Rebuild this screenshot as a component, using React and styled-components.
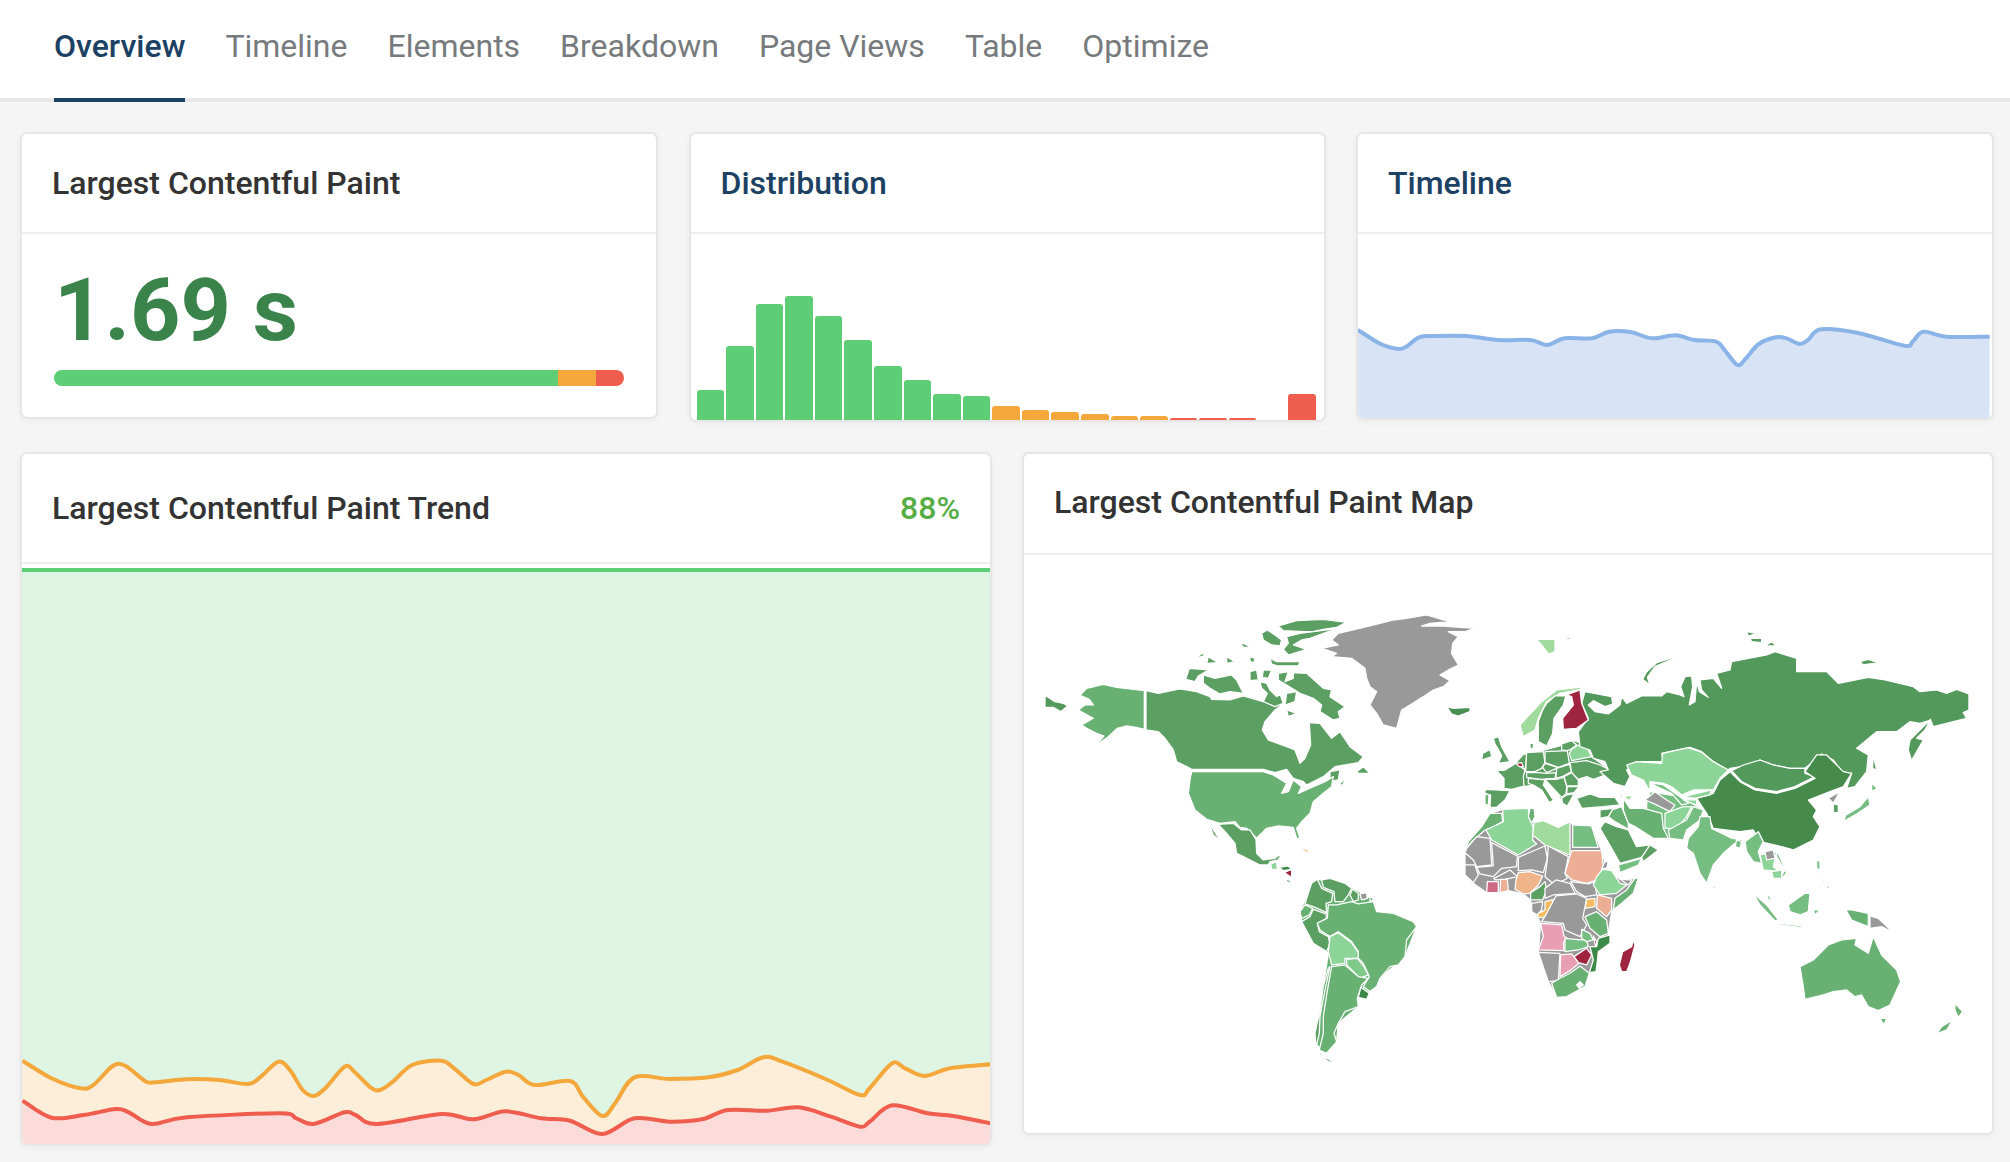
import React from 'react';
import styled, { createGlobalStyle } from 'styled-components';

const GlobalStyle = createGlobalStyle`
	html, body {
		margin: 0;
		padding: 0;
		background: #f5f5f5;
		font-family: 'Roboto', 'Liberation Sans', sans-serif;
	}
	* {
		box-sizing: border-box;
	}
`;

const GREEN = '#5ece76';
const ORANGE = '#f4a73b';
const RED = '#ef5d4e';
const NAVY = '#1c4163';

const Page = styled.div`
	width: 2010px;
	min-height: 1162px;
	background: #f5f5f5;
`;

const Tabs = styled.nav`
	display: flex;
	gap: 40px;
	height: 102px;
	padding-left: 54px;
	background: #fff;
	border-bottom: 4px solid #e8e8e8;
`;

const Tab = styled.a`
	height: 102px;
	line-height: 92px;
	font-size: 32px;
	font-weight: ${(p) => (p.$active ? 500 : 400)};
	color: ${(p) => (p.$active ? NAVY : '#767a7d')};
	border-bottom: 4px solid ${(p) => (p.$active ? NAVY : 'transparent')};
`;

const Content = styled.main`
	display: flex;
	flex-direction: column;
	gap: 30px;
	padding: 30px 16px 0 20px;
`;

const TopRow = styled.section`
	display: grid;
	grid-template-columns: 638px 637px 638px;
	gap: 30.5px;
	align-items: start;
`;

const BottomRow = styled.section`
	display: grid;
	grid-template-columns: 972px 972px;
	gap: 30px;
	align-items: start;
`;

const Card = styled.div`
	height: ${(p) => p.$height}px;
	background: #fff;
	border: 2px solid #e6e6e6;
	border-radius: 7px;
	box-shadow: 0 2px 6px rgba(0, 0, 0, 0.04);
	overflow: hidden;
`;

const CardHeader = styled.header`
	display: flex;
	align-items: center;
	justify-content: space-between;
	height: ${(p) => p.$height}px;
	padding: 0 30px ${(p) => p.$lift || 0}px;
	border-bottom: 2px solid #eeeeee;
`;

const CardTitle = styled.h2`
	margin: 0;
	font-size: 32px;
	font-weight: 500;
	color: ${(p) => p.$color || '#333'};
`;

const Percent = styled.span`
	font-size: 32px;
	font-weight: 500;
	color: #56ad44;
`;

const ValueBody = styled.div`
	padding: 23px 32px 0 32px;
`;

const Value = styled.div`
	height: 113px;
	font-size: 88px;
	line-height: 106px;
	font-weight: 700;
	color: #3a844c;
`;

const Bar = styled.div`
	display: flex;
	height: 16px;
	border-radius: 8px;
	overflow: hidden;
`;

const BarPart = styled.span`
	flex: ${(p) => p.$size} 0 0;
	background: ${(p) => p.$color};
`;

const Histogram = styled.div`
	display: flex;
	align-items: flex-end;
	gap: 2px;
	height: 186px;
	padding: 0 8px 0 6px;
`;

const HistBar = styled.span`
	flex: 1;
	height: ${(p) => p.$h}px;
	background: ${(p) => p.$color};
	border-radius: 3px 3px 0 0;
`;

const Chart = styled.svg`
	display: block;
	width: 100%;
	height: ${(p) => p.$height}px;
`;

const hist = [30, 74, 116, 124, 104, 80, 54, 40, 26, 24, 14, 10, 8, 6, 4, 4, 2, 2, 2, 0, 26];
const histColor = (i) => (i < 10 ? GREEN : i < 16 ? ORANGE : RED);

// Catmull-Rom through the points, good enough for the sparkline curves
const smooth = (pts) => {
	let d = `M${pts[0][0].toFixed(1)},${pts[0][1].toFixed(1)}`;
	for (let i = 0; i < pts.length - 1; i++) {
		const p0 = pts[i - 1] || pts[i];
		const p1 = pts[i];
		const p2 = pts[i + 1];
		const p3 = pts[i + 2] || p2;
		const c1 = [p1[0] + (p2[0] - p0[0]) / 6, p1[1] + (p2[1] - p0[1]) / 6];
		const c2 = [p2[0] - (p3[0] - p1[0]) / 6, p2[1] - (p3[1] - p1[1]) / 6];
		d += ` C${c1[0].toFixed(1)},${c1[1].toFixed(1)} ${c2[0].toFixed(1)},${c2[1].toFixed(1)} ${p2[0].toFixed(1)},${p2[1].toFixed(1)}`;
	}
	return d;
};

const timelinePts = [
	[42, 630], [95, 672], [135, 687], [155, 680], [185, 652], [220, 648], [295, 648], [370, 660], [445, 660], [485, 675],
	[525, 655], [590, 655], [630, 635], [680, 636], [730, 655], [785, 646], [830, 660], [880, 665], [900, 690], [930, 735],
	[950, 715], [980, 672], [1020, 652], [1045, 655], [1075, 672], [1095, 660], [1125, 628], [1210, 638], [1320, 677],
	[1340, 665], [1365, 635], [1420, 650], [1520, 650],
].map(([x, y]) => [1340 + x / 2.34, 120 + y / 3]);

const trendScale = ([x, y]) => [x / 1.5525, 1000 + y / 3];

const orangePts = [
	[35, 182], [80, 235], [125, 265], [145, 255], [175, 198], [195, 198], [225, 243], [240, 247], [290, 238], [340, 240],
	[385, 252], [405, 230], [432, 185], [450, 210], [470, 270], [487, 288], [505, 265], [535, 200], [550, 215], [575, 262],
	[590, 270], [610, 245], [640, 195], [685, 182], [705, 205], [735, 252], [755, 240], [785, 215], [805, 225], [830, 255],
	[885, 243], [905, 290], [935, 348], [955, 310], [985, 232], [1040, 237], [1100, 232], [1145, 210], [1185, 172], [1215, 185],
	[1285, 240], [1335, 285], [1350, 265], [1385, 190], [1405, 205], [1435, 228], [1475, 205], [1538, 193],
].map(trendScale);

const redPts = [
	[35, 302], [80, 353], [130, 345], [180, 327], [200, 337], [235, 372], [290, 352], [435, 340], [460, 355], [487, 372],
	[535, 337], [552, 345], [585, 372], [685, 342], [735, 358], [785, 334], [840, 355], [885, 362], [935, 402], [985, 355],
	[1040, 365], [1090, 358], [1130, 330], [1190, 332], [1240, 322], [1290, 350], [1335, 380], [1350, 365], [1385, 316],
	[1440, 340], [1480, 348], [1538, 370],
].map(trendScale);

const area = (pts, bottom) => `${smooth(pts)} L${pts[pts.length - 1][0]},${bottom} L${pts[0][0]},${bottom} Z`;

const C = {
	canada: '#5c9f62',
	usa: '#69b073',
	russia: '#54995c',
	china: '#478b4c',
	mid: '#75bd80',
	light: '#8dd498',
	pale: '#a0da9d',
	grey: '#999999',
	wine: '#9e2440',
	salmon: '#ecae94',
	peach: '#f0b48a',
	pink: '#e89fb3',
	rose: '#cd6a85',
	amber: '#f5b95f',
	dark: '#3d8a48',
};

// coordinates are in 3x pixels, each group is moved into place below
const americas = [
	[C.russia, 'M45,316 L75,335 L100,340 L113,348 L92,365 L70,352 L45,352 Z'],
	[C.usa, 'M170,295 L220,283 L260,292 L343,302 L343,418 L318,412 L290,408 L262,415 L235,440 L195,468 L222,438 L200,430 L170,415 L155,405 L190,385 L172,375 L145,360 L165,345 L190,345 L178,328 L150,316 Z'],
	[C.canada, 'M348,302 L385,310 L450,297 L500,305 L540,320 L545,328 L600,330 L640,318 L700,335 L710,312 L745,335 L755,345 L735,360 L705,395 L697,420 L715,450 L770,470 L795,480 L810,520 L825,505 L842,465 L838,398 L870,400 L905,445 L930,425 L960,470 L1000,500 L985,518 L915,530 L880,560 L830,585 L820,575 L790,565 L770,538 L735,548 L700,538 L485,538 L470,530 L440,515 L430,480 L405,445 L385,425 L348,420 Z'],
	[C.canada, 'M745,250 L775,245 L765,275 L790,265 L790,248 L830,250 L880,295 L905,300 L900,320 L945,350 L925,365 L930,385 L910,390 L870,365 L875,345 L850,325 L810,310 L770,285 L745,270 Z'],
	[C.canada, 'M745,108 L800,92 L880,88 L950,97 L920,112 L880,118 L850,125 L825,125 L760,122 Z'],
	[C.canada, 'M770,140 L810,130 L850,125 L925,115 L895,125 L840,145 L815,150 L790,165 L830,178 L775,195 L760,178 L775,160 Z'],
	[C.canada, 'M520,255 L555,265 L605,255 L620,270 L640,310 L600,305 L570,312 L540,295 L520,280 Z'],
	[C.canada, 'M478,235 L535,240 L505,258 L495,275 L467,268 Z'],
	[C.canada, 'M720,205 L740,215 L810,215 L805,228 L745,228 L725,222 Z'],
	[C.canada, 'M695,130 L712,120 L735,135 L755,150 L750,168 L725,165 L700,150 Z'],
	[C.canada, 'M495,205 L525,185 L520,198 Z'],
	[C.canada, 'M535,200 L565,218 L530,220 Z'],
	[C.canada, 'M590,200 L615,215 L590,220 Z'],
	[C.canada, 'M630,155 L660,170 L640,172 Z'],
	[C.canada, 'M660,200 L675,205 L672,218 L660,215 Z'],
	[C.canada, 'M660,245 L680,240 L685,270 L660,272 Z'],
	[C.canada, 'M700,240 L725,240 L715,265 L697,262 Z'],
	[C.canada, 'M690,275 L710,280 L720,300 L740,320 L750,312 L760,340 L735,350 L700,335 L712,310 L695,295 Z'],
	[C.canada, 'M770,310 L800,305 L795,335 L765,345 Z'],
	[C.canada, 'M770,360 L800,370 L775,380 Z'],
	[C.canada, 'M980,545 L1000,530 L1020,550 L985,550 Z'],
	[C.canada, 'M900,545 L930,540 L925,570 L900,575 Z'],
	[C.canada, 'M930,580 L950,565 L935,588 Z'],
	[C.usa, 'M485,545 L700,545 L730,555 L770,580 L755,610 L775,605 L790,570 L815,590 L805,610 L850,590 L885,575 L910,560 L905,590 L880,610 L850,635 L840,670 L815,695 L800,715 L810,745 L800,745 L790,712 L745,708 L710,715 L680,745 L650,715 L630,712 L615,695 L570,700 L530,688 L495,660 L475,610 L480,570 Z'],
	[C.canada, 'M535,695 L560,735 L575,755 L550,735 Z'],
	[C.canada, 'M565,703 L610,700 L635,720 L660,720 L678,748 L680,790 L700,810 L735,805 L757,788 L745,810 L720,815 L715,825 L690,825 L640,800 L620,790 L615,760 L590,730 Z'],
	['#f5c48a', 'M805,772 L830,778 L845,792 L825,785 Z'],
	[C.light, 'M722,822 L740,815 L742,838 L725,838 Z'],
	[C.dark, 'M748,832 L775,828 L785,838 L760,842 Z'],
	[C.wine, 'M762,848 L785,838 L785,862 Z'],
	[C.canada, 'M770,865 L790,880 L810,888 L790,882 L770,875 Z'],
	// south america base, so no holes show between the countries
	[C.usa, 'M862,868 L945,880 L1030,930 L1040,965 L1150,995 L1160,1010 L1125,1100 L1050,1165 L1020,1205 L982,1225 L985,1250 L925,1300 L920,1355 L890,1390 L860,1365 L855,1330 L880,1190 L895,1090 L850,1060 L815,995 L810,965 L838,900 Z'],
	[C.canada, 'M862,868 L875,895 L908,910 L905,935 L888,940 L890,968 L850,950 L825,942 L838,900 L845,880 Z'],
	[C.canada, 'M875,870 L900,865 L945,880 L965,895 L955,915 L940,935 L915,935 L912,905 L880,892 Z'],
	[C.canada, 'M968,897 L985,910 L985,930 L970,935 L960,915 Z'],
	[C.grey, 'M990,912 L1010,908 L1012,925 L995,930 Z'],
	[C.canada, 'M1020,915 L1030,930 L1020,935 Z'],
	[C.usa, 'M825,945 L848,955 L838,975 L815,985 L810,965 Z'],
	[C.canada, 'M850,958 L888,972 L890,985 L862,1000 L868,1025 L895,1040 L900,1060 L890,1085 L850,1060 L815,995 L840,980 Z'],
	[C.usa, 'M895,945 L920,945 L965,935 L985,942 L1030,935 L1040,965 L1090,970 L1150,995 L1160,1010 L1130,1050 L1125,1100 L1105,1125 L1080,1130 L1050,1165 L1040,1190 L1020,1205 L1000,1190 L1018,1160 L1000,1120 L985,1105 L985,1085 L965,1055 L925,1025 L900,1040 L870,1020 L862,1000 L892,985 Z'],
	[C.light, 'M900,1040 L925,1028 L965,1058 L985,1088 L985,1105 L945,1105 L945,1120 L905,1125 L895,1085 Z'],
	['#7fc98a', 'M950,1108 L982,1105 L1002,1130 L1015,1155 L990,1165 L950,1125 Z'],
	[C.dark, 'M992,1192 L1018,1210 L1010,1228 L985,1222 Z'],
	[C.usa, 'M905,1130 L945,1125 L985,1160 L1015,1165 L995,1185 L982,1225 L985,1250 L945,1265 L925,1300 L912,1330 L920,1355 L890,1390 L868,1380 L880,1330 L880,1280 L890,1215 Z'],
	[C.canada, 'M900,1130 L885,1200 L870,1280 L868,1330 L860,1365 L870,1395 L895,1415 L920,1420 L880,1400 L858,1370 L855,1330 L870,1260 L880,1190 L895,1135 Z'],
	['#4a8f52', 'M1250,350 L1270,355 L1320,352 L1320,365 L1285,378 L1265,372 Z'],
	[C.grey, 'M1090,90 L1130,85 L1190,75 L1258,95 L1200,100 L1175,108 L1240,108 L1335,115 L1305,125 L1255,125 L1285,140 L1268,160 L1265,190 L1285,225 L1255,240 L1230,255 L1260,272 L1240,290 L1210,300 L1180,320 L1140,345 L1115,360 L1100,415 L1060,405 L1040,370 L1020,345 L1040,305 L1020,290 L1010,265 L1005,235 L965,205 L905,200 L920,190 L875,175 L925,165 L905,150 L925,130 L1010,110 L1050,100 Z'],
];

const europeAfrica = [
	[C.canada, 'M190,55 L205,50 L215,80 L240,125 L205,130 L215,108 L205,88 L195,72 Z'],
	[C.canada, 'M158,100 L180,88 L185,110 L155,120 Z'],
	// europe base
	[C.canada, 'M200,152 L225,150 L258,128 L285,100 L345,90 L400,75 L425,60 L470,75 L485,110 L520,135 L540,150 L525,165 L490,178 L470,170 L445,178 L448,195 L432,218 L412,225 L412,258 L398,250 L380,215 L345,180 L340,195 L370,240 L358,248 L335,210 L310,195 L282,200 L245,208 L222,205 L222,175 Z'],
	[C.canada, 'M200,152 L225,150 L258,130 L285,150 L280,170 L282,198 L245,208 L222,205 L222,175 Z'],
	[C.canada, 'M258,128 L278,105 L290,100 L288,135 L285,148 Z'],
	[C.wine, 'M258,130 L275,128 L280,140 L268,140 Z'],
	[C.canada, 'M165,208 L240,212 L225,240 L200,262 L180,262 L182,225 L165,220 Z'],
	[C.usa, 'M165,222 L177,225 L175,255 L165,255 Z'],
	[C.canada, 'M290,98 L340,95 L345,128 L335,145 L315,155 L287,155 L288,135 Z'],
	[C.canada, 'M345,95 L412,92 L418,130 L385,142 L345,128 Z'],
	[C.canada, 'M338,143 L345,130 L385,143 L350,158 Z'],
	[C.canada, 'M290,158 L315,157 L350,160 L378,158 L375,175 L330,178 L290,172 Z'],
	[C.canada, 'M380,145 L418,133 L425,155 L400,168 L378,175 Z'],
	[C.canada, 'M420,128 L470,122 L510,135 L540,150 L525,165 L490,178 L470,170 L445,178 L425,158 Z'],
	[C.canada, 'M402,170 L425,158 L445,180 L445,198 L410,198 Z'],
	[C.canada, 'M345,178 L378,178 L402,172 L410,200 L408,222 L395,232 Z'],
	[C.canada, 'M412,200 L447,200 L432,218 L410,222 Z'],
	[C.canada, 'M395,235 L410,225 L432,222 L412,258 L398,250 Z'],
	[C.canada, 'M295,175 L345,180 L340,195 L370,240 L358,248 L335,210 L310,195 L295,190 Z'],
	[C.canada, 'M395,72 L425,62 L440,75 L422,88 L410,92 L395,90 Z'],
	[C.light, 'M425,88 L445,75 L470,80 L485,110 L425,122 L418,100 Z'],
	[C.canada, 'M440,235 L480,222 L510,232 L555,232 L570,255 L520,260 L455,265 Z'],
	// africa base
	[C.grey, 'M155,320 L180,280 L218,268 L295,265 L312,265 L312,308 L340,302 L385,322 L420,305 L428,315 L485,318 L515,392 L530,445 L570,478 L625,475 L610,520 L575,550 L545,575 L535,640 L540,670 L505,695 L498,755 L478,760 L465,800 L410,830 L380,832 L355,785 L325,697 L332,610 L322,590 L305,575 L302,540 L280,522 L235,512 L205,518 L170,518 L130,490 L105,465 L105,398 Z'],
	[C.usa, 'M155,320 L180,280 L215,280 L218,305 L195,318 L165,330 L125,365 L105,390 L115,365 Z'],
	[C.light, 'M218,268 L295,265 L298,290 L310,325 L308,360 L320,372 L265,405 L185,360 L168,330 L220,305 Z'],
	[C.usa, 'M300,265 L312,265 L315,290 L305,310 L295,290 Z'],
	[C.pale, 'M312,308 L340,302 L385,322 L420,305 L420,405 L345,375 L308,345 Z'],
	[C.mid, 'M428,315 L485,318 L505,382 L428,382 Z'],
	[C.grey, 'M110,385 L140,350 L180,355 L185,435 L140,440 L130,420 L105,398 Z'],
	[C.grey, 'M185,368 L262,408 L260,440 L215,445 L190,470 L150,462 L140,442 L190,438 Z'],
	[C.grey, 'M265,412 L345,378 L352,415 L340,458 L305,450 L265,452 Z'],
	[C.grey, 'M355,378 L415,410 L405,460 L412,475 L375,495 L345,470 L352,420 Z'],
	[C.salmon, 'M425,392 L515,392 L520,440 L500,480 L470,490 L425,480 L405,460 Z'],
	[C.grey, 'M105,435 L135,435 L145,465 L130,488 L105,465 Z'],
	[C.grey, 'M192,475 L240,450 L262,470 L225,478 L195,480 Z'],
	[C.rose, 'M172,485 L205,485 L205,518 L170,518 Z'],
	[C.salmon, 'M212,478 L232,478 L235,512 L210,518 Z'],
	[C.peach, 'M265,458 L300,455 L338,468 L325,495 L300,520 L280,522 L255,508 L258,480 Z'],
	[C.canada, 'M345,485 L350,510 L338,540 L302,540 L302,518 L330,500 Z'],
	[C.grey, 'M345,505 L378,480 L420,490 L435,520 L370,525 L345,535 Z'],
	[C.grey, 'M422,485 L475,492 L495,485 L500,525 L465,530 L440,515 Z'],
	[C.light, 'M518,448 L545,452 L570,490 L590,495 L560,520 L510,525 L490,495 L500,470 Z'],
	[C.usa, 'M555,535 L590,510 L615,475 L625,475 L610,520 L575,550 L550,570 Z'],
	[C.grey, 'M570,478 L605,480 L595,495 Z'],
	[C.grey, 'M525,425 L535,425 L530,445 L515,445 Z'],
	[C.salmon, 'M502,525 L545,535 L545,570 L530,590 L500,565 Z'],
	[C.amber, 'M470,538 L495,535 L495,560 L465,565 Z'],
	[C.grey, 'M305,550 L338,545 L335,570 L322,585 L305,575 Z'],
	[C.amber, 'M345,545 L372,538 L358,575 L345,592 L322,592 L325,580 L345,570 Z'],
	[C.grey, 'M378,528 L440,522 L470,535 L458,595 L470,615 L450,650 L405,630 L400,610 L335,605 L350,580 Z'],
	[C.usa, 'M465,590 L500,575 L530,600 L535,640 L510,650 L480,625 Z'],
	[C.pink, 'M332,610 L395,615 L402,648 L412,655 L400,668 L402,692 L325,690 L340,650 Z'],
	[C.mid, 'M405,655 L450,660 L470,660 L475,680 L445,690 L405,695 Z'],
	[C.mid, 'M455,628 L480,640 L490,660 L470,665 L455,655 Z'],
	[C.wine, 'M490,648 L500,665 L498,685 Z'],
	[C.dark, 'M505,655 L540,645 L540,670 L505,695 L502,725 L498,755 L478,758 L490,720 L480,680 L500,680 Z'],
	[C.wine, 'M432,710 L470,685 L485,705 L470,735 L445,728 Z'],
	[C.grey, 'M325,697 L390,700 L385,782 L355,785 Z'],
	[C.pink, 'M392,705 L425,702 L447,730 L420,752 L390,770 Z'],
	[C.usa, 'M365,790 L390,775 L420,760 L450,738 L478,760 L465,800 L410,830 L380,832 Z'],
	['#ffffff', 'M440,795 L450,785 L460,795 L448,805 Z'],
	[C.wine, 'M610,660 L615,675 L600,730 L590,755 L575,755 L568,735 L578,695 L605,680 Z'],
	[C.canada, 'M525,305 L560,320 L595,330 L620,380 L660,375 L635,412 L570,430 L545,385 L510,325 Z'],
	[C.canada, 'M660,375 L685,390 L640,425 L635,412 Z'],
	[C.mid, 'M565,435 L635,415 L625,435 L570,458 Z'],
	[C.usa, 'M545,270 L575,260 L595,310 L595,328 L555,305 L535,290 Z'],
	[C.canada, 'M510,270 L550,265 L535,290 L510,295 Z'],
];

const asia = [
	[C.pale, 'M170,148 L225,148 L225,185 L205,192 L185,165 Z'],
	[C.pale, 'M250,145 L285,140 L265,150 Z'],
	[C.russia, 'M605,195 L530,218 L500,245 L488,268 L510,285 L502,262 L525,230 Z'],
	[C.russia, 'M800,125 L830,130 L805,138 Z'],
	[C.russia, 'M810,145 L845,145 L845,158 L815,155 Z'],
	[C.russia, 'M855,168 L875,155 L890,168 Z'],
	[C.russia, 'M1140,215 L1165,208 L1195,218 L1150,225 Z'],
	[C.russia, 'M315,305 L395,320 L398,342 L375,350 L340,332 L325,345 L345,365 L385,372 L420,345 L425,320 L440,340 L485,318 L545,318 L560,305 L600,315 L612,320 L602,290 L615,260 L635,258 L638,290 L628,345 L645,335 L650,275 L658,305 L685,322 L665,300 L660,270 L700,265 L725,295 L710,250 L750,240 L755,215 L860,195 L885,185 L950,205 L950,245 L1040,245 L1075,280 L1165,262 L1215,270 L1300,290 L1320,305 L1370,300 L1400,310 L1430,298 L1467,312 L1467,360 L1450,368 L1460,385 L1420,395 L1360,410 L1352,390 L1320,400 L1290,395 L1250,425 L1190,425 L1130,475 L1165,495 L1160,545 L1125,590 L1100,595 L1115,550 L1085,545 L1060,510 L1025,492 L1000,515 L975,535 L930,535 L880,525 L840,510 L820,525 L750,535 L745,540 L700,515 L665,485 L630,472 L545,490 L550,515 L470,515 L440,540 L450,560 L435,590 L400,580 L360,545 L385,540 L375,515 L340,505 L330,480 L300,470 L295,425 L325,385 L305,340 Z'],
	[C.pale, 'M120,405 L185,335 L230,300 L315,290 L295,300 L240,310 L200,335 L175,385 L165,420 L130,440 Z'],
	[C.canada, 'M200,340 L225,318 L258,318 L250,345 L222,385 L218,430 L200,468 L175,455 L175,395 L188,360 Z'],
	[C.wine, 'M260,315 L300,300 L305,340 L325,390 L290,415 L250,418 L248,385 L280,345 L275,320 Z'],
	[C.canada, 'M150,460 L160,460 L160,475 L150,475 Z'],
	[C.russia, 'M1352,388 L1335,420 L1310,445 L1330,450 L1295,512 L1285,480 L1290,450 Z'],
	[C.russia, 'M1180,495 L1190,540 L1178,535 Z'],
	[C.light, 'M440,525 L470,515 L545,520 L548,490 L625,473 L665,487 L700,515 L745,540 L720,565 L700,600 L640,600 L605,615 L575,590 L550,580 L510,575 L510,605 L490,570 L455,555 Z'],
	[C.russia, 'M755,542 L790,525 L840,510 L880,525 L930,535 L975,535 L975,550 L1005,560 L945,590 L890,605 L825,595 L785,575 Z'],
	[C.china, 'M750,545 L780,575 L825,600 L890,610 L945,595 L1005,565 L975,545 L1010,495 L1040,495 L1075,530 L1090,545 L1115,550 L1090,590 L1050,605 L985,630 L1010,660 L1000,680 L1020,710 L1000,750 L940,780 L905,770 L840,755 L820,720 L780,725 L700,715 L680,670 L650,625 L700,610 L720,570 Z'],
	[C.grey, 'M1045,625 L1080,605 L1060,640 Z'],
	[C.canada, 'M1060,642 L1075,645 L1075,668 L1060,668 Z'],
	[C.mid, 'M1175,580 L1192,595 L1175,605 Z'],
	[C.mid, 'M1165,620 L1170,645 L1130,672 L1090,695 L1098,675 L1140,650 Z'],
	// middle east base
	[C.mid, 'M500,640 L510,605 L600,620 L670,660 L620,720 L610,750 L520,745 L500,700 Z'],
	[C.grey, 'M495,630 L525,605 L560,630 L585,645 L570,665 L520,640 Z'],
	[C.mid, 'M512,578 L550,585 L600,620 L625,640 L605,645 L575,610 L530,590 Z'],
	[C.light, 'M610,620 L695,600 L690,615 L645,625 Z'],
	[C.light, 'M610,630 L650,630 L650,645 Z'],
	[C.usa, 'M430,625 L450,655 L490,655 L545,670 L550,715 L565,745 L520,745 L465,710 L445,700 L430,660 Z'],
	[C.light, 'M555,670 L610,650 L635,650 L620,680 L590,715 L555,715 Z'],
	[C.mid, 'M565,720 L620,690 L640,650 L670,660 L660,690 L620,720 L610,750 L570,745 Z'],
	[C.mid, 'M660,680 L690,680 L695,715 L755,745 L790,750 L770,770 L765,760 L730,790 L700,825 L680,880 L660,850 L640,790 L620,775 L625,745 L655,710 Z'],
	[C.mid, 'M770,750 L785,755 L780,775 L765,770 Z'],
	[C.mid, 'M795,755 L835,725 L850,755 L835,785 L845,820 L820,815 L800,785 Z'],
	[C.light, 'M840,795 L890,785 L880,830 L900,845 L850,840 Z'],
	[C.grey, 'M855,785 L880,780 L885,805 L860,810 Z'],
	[C.mid, 'M890,780 L915,835 L920,850 L895,875 L915,840 L890,800 Z'],
	[C.light, 'M875,845 L905,840 L905,865 L880,865 Z'],
	[C.mid, 'M700,885 L708,895 L700,897 Z'],
	[C.mid, 'M820,910 L860,945 L895,990 L885,993 L840,945 Z'],
	[C.mid, 'M860,905 L875,930 L865,930 Z'],
	[C.mid, 'M925,945 L975,910 L990,910 L985,965 L960,975 L930,965 Z'],
	[C.mid, 'M900,1000 L965,1008 L965,1013 L900,1005 Z'],
	[C.mid, 'M1000,960 L1020,960 L1005,975 Z'],
	[C.mid, 'M1010,810 L1020,815 L1020,840 L1010,835 Z'],
	[C.mid, 'M1025,865 L1035,870 L1028,875 Z'],
	[C.mid, 'M1040,885 L1050,890 L1043,900 Z'],
	[C.usa, 'M1098,960 L1115,960 L1165,970 L1165,1010 L1115,990 Z'],
	[C.grey, 'M1170,978 L1195,985 L1240,1028 L1205,1010 L1170,1015 Z'],
	[C.usa, 'M960,1130 L1000,1110 L1045,1065 L1085,1050 L1130,1045 L1125,1065 L1165,1090 L1180,1040 L1205,1095 L1250,1140 L1262,1175 L1230,1245 L1195,1262 L1165,1250 L1145,1215 L1125,1220 L1100,1200 L1060,1205 L1030,1215 L975,1228 L970,1190 Z'],
	[C.usa, 'M1200,1285 L1220,1285 L1212,1305 Z'],
	[C.usa, 'M1425,1240 L1448,1265 L1435,1282 L1425,1260 Z'],
	[C.usa, 'M1418,1290 L1400,1320 L1370,1332 L1385,1310 Z'],
	[C.wine, 'M420,615 L428,615 L424,625 Z'],
	[C.pale, 'M432,618 L460,618 L445,632 Z'],
];

const MapGroup = ({ x, y, shapes }) => (
	<g transform={`translate(${x} ${y}) scale(0.3333)`} stroke='#fff' strokeWidth='3.8' strokeLinejoin='round'>
		{shapes.map(([fill, d], i) => (
			<path key={i} d={d} fill={fill} />
		))}
	</g>
);

const tabs = ['Overview', 'Timeline', 'Elements', 'Breakdown', 'Page Views', 'Table', 'Optimize'];

const App = () => {
	return (
		<Page>
			<GlobalStyle />
			<Tabs>
				{tabs.map((t, i) => (
					<Tab key={t} $active={i === 0}>
						{t}
					</Tab>
				))}
			</Tabs>
			<Content>
				<TopRow>
					<Card $height={287}>
						<CardHeader $height={100}>
							<CardTitle>Largest Contentful Paint</CardTitle>
						</CardHeader>
						<ValueBody>
							<Value>1.69 s</Value>
							<Bar>
								<BarPart $size={504} $color={GREEN} />
								<BarPart $size={38} $color={ORANGE} />
								<BarPart $size={28} $color={RED} />
							</Bar>
						</ValueBody>
					</Card>
					<Card $height={290}>
						<CardHeader $height={100}>
							<CardTitle $color={NAVY}>Distribution</CardTitle>
						</CardHeader>
						<Histogram>
							{hist.map((h, i) => (
								<HistBar key={i} $h={h} $color={histColor(i)} />
							))}
						</Histogram>
					</Card>
					<Card $height={288}>
						<CardHeader $height={100}>
							<CardTitle $color={NAVY}>Timeline</CardTitle>
						</CardHeader>
						<Chart $height={184} viewBox='1358 234 634 184' preserveAspectRatio='none'>
							<path d={area(timelinePts, 420)} fill='#d8e4f5' />
							<path d={smooth(timelinePts)} fill='none' stroke='#8ab4e8' strokeWidth='4' />
						</Chart>
					</Card>
				</TopRow>
				<BottomRow>
					<Card $height={694}>
						<CardHeader $height={110}>
							<CardTitle>Largest Contentful Paint Trend</CardTitle>
							<Percent>88%</Percent>
						</CardHeader>
						<Chart $height={580} viewBox='22 564 968 580' preserveAspectRatio='none'>
							<rect x='22' y='570' width='968' height='575' fill='#def5e4' />
							<rect x='22' y='568' width='968' height='4' fill={GREEN} />
							<path d={area(orangePts, 1146)} fill='#fdeed9' />
							<path d={area(redPts, 1146)} fill='#fbdcdb' />
							<path d={smooth(orangePts)} fill='none' stroke={ORANGE} strokeWidth='4' />
							<path d={smooth(redPts)} fill='none' stroke={RED} strokeWidth='4' />
						</Chart>
					</Card>
					<Card $height={683}>
						<CardHeader $height={101} $lift={4}>
							<CardTitle>Largest Contentful Paint Map</CardTitle>
						</CardHeader>
						<Chart $height={578} viewBox='1024 555 968 578'>
							<MapGroup x={1030} y={590} shapes={americas} />
							<MapGroup x={1430} y={720} shapes={europeAfrica} />
							<MapGroup x={1480} y={590} shapes={asia} />
						</Chart>
					</Card>
				</BottomRow>
			</Content>
		</Page>
	);
};

export default App;
